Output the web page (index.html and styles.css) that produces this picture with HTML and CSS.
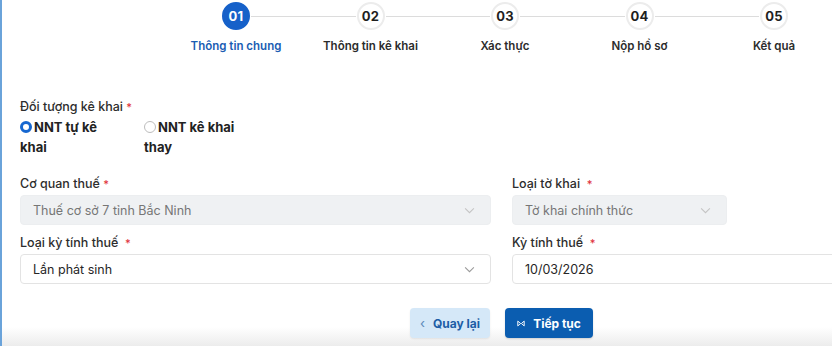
FILE: index.html
```html
<!DOCTYPE html>
<html lang="vi">
<head>
<meta charset="utf-8">
<link rel="stylesheet" href="styles.css">
</head>
<body>
<div class="page">
  <div class="stepper">
    <div class="step active"><div class="dot">01</div><div class="step-label">Thông tin chung</div></div>
    <div class="step"><div class="dot">02</div><div class="step-label">Thông tin kê khai</div></div>
    <div class="step"><div class="dot">03</div><div class="step-label">Xác thực</div></div>
    <div class="step"><div class="dot">04</div><div class="step-label">Nộp hồ sơ</div></div>
    <div class="step last"><div class="dot">05</div><div class="step-label">Kết quả</div></div>
  </div>

  <form class="form">
    <div class="field-label">Đối tượng kê khai <span class="req">*</span></div>
    <div class="radios">
      <label class="radio"><span class="rb checked"></span>NNT tự kê khai</label>
      <label class="radio"><span class="rb"></span>NNT kê khai thay</label>
    </div>

    <div class="grid">
      <div class="field">
        <div class="field-label">Cơ quan thuế <span class="req">*</span></div>
        <div class="select disabled"><span>Thuế cơ sở 7 tỉnh Bắc Ninh</span><svg class="chev" viewBox="0 0 12 8"><path d="M1 1.5l5 5 5-5" fill="none" stroke="currentColor" stroke-width="1.2"/></svg></div>
      </div>
      <div class="field">
        <div class="field-label">Loại tờ khai &nbsp;<span class="req">*</span></div>
        <div class="select disabled short"><span>Tờ khai chính thức</span><svg class="chev" viewBox="0 0 12 8"><path d="M1 1.5l5 5 5-5" fill="none" stroke="currentColor" stroke-width="1.2"/></svg></div>
      </div>
      <div class="field">
        <div class="field-label">Loại kỳ tính thuế &nbsp;<span class="req">*</span></div>
        <div class="select"><span>Lần phát sinh</span><svg class="chev" viewBox="0 0 12 8"><path d="M1 1.5l5 5 5-5" fill="none" stroke="currentColor" stroke-width="1.2"/></svg></div>
      </div>
      <div class="field">
        <div class="field-label">Kỳ tính thuế &nbsp;<span class="req">*</span></div>
        <div class="select"><span>10/03/2026</span></div>
      </div>
    </div>

    <div class="actions">
      <button type="button" class="btn btn-back"><span class="ico">‹</span>Quay lại</button>
      <button type="button" class="btn btn-next"><svg class="ico-next" viewBox="0 0 10 8"><path d="M1 1v6M9 1v6M1 1l3.5 3L1 7M9 1L5.5 4 9 7" fill="none" stroke="currentColor" stroke-width="1.2"/></svg>Tiếp tục</button>
    </div>
  </form>
</div>
</body>
</html>
```

FILE: styles.css
```css
html, body {
  margin: 0;
  padding: 0;
}
html {
  background: linear-gradient(to bottom, #ffffff 0, #ffffff 327px, #ececec 346px);
  height: 346px;
}
body {
  width: 832px;
  height: 346px;
  overflow: hidden;
  font-family: Inter, "Noto Sans", sans-serif;
  color: #2b2b2b;
  border-left: 2px solid #6aa3da;
  box-sizing: border-box;
}
.page {
  width: 1000px;
}

/* Stepper */
.stepper {
  display: grid;
  grid-template-columns: repeat(5, 134.5px);
  margin-left: 166.75px;
  padding-top: 2px;
  height: 96px;
}
.step {
  position: relative;
  display: flex;
  flex-direction: column;
  align-items: center;
}
.step::after {
  content: "";
  position: absolute;
  top: 14px;
  left: calc(50% + 15px);
  width: calc(100% - 30px);
  height: 1px;
  background: #dcdcdc;
}
.step.last::after { display: none; }
.dot {
  width: 24px;
  height: 24px;
  border-radius: 50%;
  border: 2px solid #ececec;
  background: #fff;
  display: flex;
  align-items: center;
  justify-content: center;
  font-size: 13px;
  font-weight: 700;
  color: #1f1f1f;
  letter-spacing: 0.2px;
}
.step.active .dot {
  background: #1661c9;
  border-color: #1661c9;
  color: #fff;
}
.step-label {
  margin-top: 9px;
  font-size: 11.5px;
  font-weight: 600;
  color: #2c2c2c;
  white-space: nowrap;
}
.step.active .step-label { color: #1a5db3; }

/* Form */
.form {
  margin-left: 18px;
  width: 963px;
}
.field-label {
  font-size: 12.5px;
  line-height: 18px;
  font-weight: 500;
  color: #2d2d2d;
}
.req {
  color: #e0303a;
  font-size: 11px;
}
.radios {
  display: flex;
  gap: 24px;
  margin-top: 1px;
}
.radio {
  width: 100px;
  font-size: 13px;
  font-weight: 700;
  line-height: 20px;
  color: #222;
}
.rb {
  display: inline-block;
  width: 12px;
  height: 12px;
  border-radius: 50%;
  border: 1px solid #bdbdbd;
  box-sizing: border-box;
  vertical-align: -1px;
  margin-right: 2px;
  background: #fff;
}
.rb.checked {
  border: 3px solid #1667d0;
}
.grid {
  display: grid;
  grid-template-columns: 471px 471px;
  column-gap: 21px;
  row-gap: 9px;
  margin-top: 18px;
}
.field .field-label { margin-bottom: 2px; }
.select {
  height: 30px;
  box-sizing: border-box;
  border: 1px solid #e3e3e3;
  border-radius: 4px;
  background: #fff;
  display: flex;
  align-items: center;
  justify-content: space-between;
  padding: 0 12px;
  font-size: 12.5px;
  color: #262626;
}
.select.disabled {
  background: #eff1f3;
  border-color: #eceef0;
  color: #767676;
}
.select.short { width: 215px; }
.chev {
  width: 11px;
  height: 7px;
  color: #9a9a9a;
  margin-right: 3px;
}
.select.disabled .chev { color: #c4c4c4; }

.actions {
  display: flex;
  justify-content: center;
  gap: 15px;
  margin-top: 24px;
}
.btn {
  height: 30px;
  border: none;
  border-radius: 4px;
  font-family: Inter, "Noto Sans", sans-serif;
  font-size: 12px;
  font-weight: 700;
  display: flex;
  align-items: center;
  justify-content: center;
  gap: 8px;
  padding: 0;
}
.btn-back {
  width: 80px;
  background: #d5e8f8;
  color: #1d5ea6;
  box-shadow: 0 1px 2px rgba(0,0,0,0.08);
}
.btn-back .ico {
  font-weight: 400;
  font-size: 13px;
  color: #5b86b8;
}
.btn-next {
  width: 88px;
  background: #0b5db0;
  color: #fff;
  box-shadow: 0 1px 2px rgba(0,0,0,0.15);
}
.ico-next {
  width: 8px;
  height: 7px;
}
```
